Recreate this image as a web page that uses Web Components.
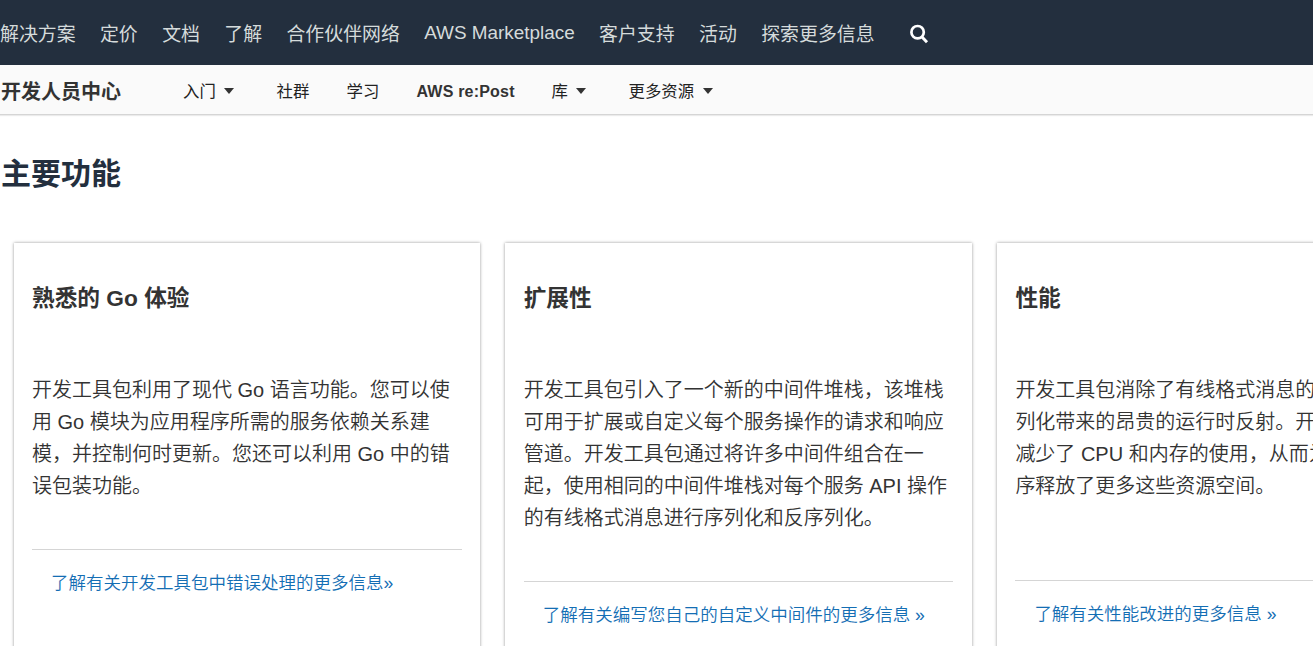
<!DOCTYPE html>
<html lang="zh-CN">
<head>
<meta charset="utf-8">
<title>主要功能</title>
<style>
    body{
        margin: 0;
        height: 646px;
        overflow: hidden;
        background: #fff;
        color: #333;
        font-family: 'Liberation Sans', 'Noto Sans CJK SC', sans-serif;
    }
</style>
</head>
<body>
<dev-page>
    <top-nav slot="nav">
        <span>解决方案</span>
        <span>定价</span>
        <span>文档</span>
        <span>了解</span>
        <span>合作伙伴网络</span>
        <span>AWS Marketplace</span>
        <span>客户支持</span>
        <span>活动</span>
        <span>探索更多信息</span>
    </top-nav>
    <sub-nav slot="nav">
        <span slot="title">开发人员中心</span>
        <nav-item style="width:93.5px" menu>入门</nav-item>
        <nav-item style="width:70px">社群</nav-item>
        <nav-item style="width:70px">学习</nav-item>
        <nav-item style="width:135px" latin>AWS re:Post</nav-item>
        <nav-item style="width:77px" menu>库</nav-item>
        <nav-item menu>更多资源</nav-item>
    </sub-nav>
    <span slot="heading">主要功能</span>
    <feature-card>
        <span slot="title">熟悉的 Go 体验</span>
        开发工具包利用了现代 Go 语言功能。您可以使用 Go 模块为应用程序所需的服务依赖关系建模，并控制何时更新。您还可以利用 Go 中的错误包装功能。
        <span slot="link">了解有关开发工具包中错误处理的更多信息»</span>
    </feature-card>
    <feature-card>
        <span slot="title">扩展性</span>
        开发工具包引入了一个新的中间件堆栈，该堆栈可用于扩展或自定义每个服务操作的请求和响应管道。开发工具包通过将许多中间件组合在一起，使用相同的中间件堆栈对每个服务 API 操作的有线格式消息进行序列化和反序列化。
        <span slot="link">了解有关编写您自己的自定义中间件的更多信息 »</span>
    </feature-card>
    <feature-card style="--copy-height:159px">
        <span slot="title">性能</span>
        开发工具包消除了有线格式消息的<br>列化带来的昂贵的运行时反射。开<br>减少了 CPU 和内存的使用，从而为<br>序释放了更多这些资源空间。
        <span slot="link">了解有关性能改进的更多信息 »</span>
    </feature-card>
</dev-page>

<script>
class DevPage extends HTMLElement {
    constructor() {
        super();
        this.attachShadow({ mode: 'open' })
    }
    connectedCallback() {
        this.render()
    }
    static get styles() {
        return /*CSS*/ `
            :host{
                display: block;
                height: 646px;
                overflow: hidden;
            }
            h2{
                margin: 0;
                padding: 36px 0 0 1px;
                font-size: 30px;
                line-height: 45px;
                color: #232f3e;
            }
            .cards{
                display: grid;
                grid-template-columns: repeat(3, 466.5px);
                column-gap: 25.2px;
                padding: 47px 0 0 13.5px;
            }
        `;
    }
    render() {
        this.shadowRoot.innerHTML = /*HTML*/ `
            <style>${DevPage.styles}</style>
            <slot name="nav"></slot>
            <main>
                <h2><slot name="heading"></slot></h2>
                <section class="cards"><slot></slot></section>
            </main>
        `;
    }
}
customElements.define("dev-page", DevPage);

class TopNav extends HTMLElement {
    constructor() {
        super();
        this.attachShadow({ mode: 'open' })
    }
    connectedCallback() {
        this.render()
    }
    static get styles() {
        return /*CSS*/ `
            :host{
                display: block;
                background: #232f3e;
                color: #d5dbdb;
            }
            nav{
                display: flex;
                align-items: center;
                gap: 24.4px;
                height: 65px;
                font-size: 18.9px;
                white-space: nowrap;
            }
            svg{
                width: 20px;
                height: 20px;
                margin: 3px 0 0 10.5px;
            }
        `;
    }
    render() {
        this.shadowRoot.innerHTML = /*HTML*/ `
            <style>${TopNav.styles}</style>
            <nav>
                <slot></slot>
                <svg viewBox="0 0 20 20" fill="none" stroke="#fff">
                    <circle cx="8.6" cy="8.2" r="6.2" stroke-width="2.7"/>
                    <path d="M12.8 12.8L18 18.2" stroke-width="3"/>
                </svg>
            </nav>
        `;
    }
}
customElements.define("top-nav", TopNav);

class SubNav extends HTMLElement {
    constructor() {
        super();
        this.attachShadow({ mode: 'open' })
    }
    connectedCallback() {
        this.render()
    }
    static get styles() {
        return /*CSS*/ `
            :host{
                display: block;
                background: #fafafa;
                border-bottom: 1px solid #d5d5d5;
                box-shadow: 0 1px 1px rgba(0, 0, 0, .08);
            }
            nav{
                display: flex;
                align-items: center;
                height: 49px;
            }
            strong{
                width: 183px;
                padding: 4px 0 0 1px;
                font-size: 20px;
                line-height: 30px;
                box-sizing: border-box;
            }
        `;
    }
    render() {
        this.shadowRoot.innerHTML = /*HTML*/ `
            <style>${SubNav.styles}</style>
            <nav>
                <strong><slot name="title"></slot></strong>
                <slot></slot>
            </nav>
        `;
    }
}
customElements.define("sub-nav", SubNav);

class NavItem extends HTMLElement {
    constructor() {
        super();
        this.attachShadow({ mode: 'open' })
    }
    connectedCallback() {
        this.render()
    }
    static get styles() {
        return /*CSS*/ `
            :host{
                display: flex;
                align-items: center;
                gap: 8.5px;
                padding-top: 3px;
                font-size: 16.4px;
                font-weight: 400;
                line-height: 24px;
                white-space: nowrap;
                color: #222;
            }
            :host([latin]){
                padding-top: 4px;
                font-size: 16px;
                font-weight: 700;
                letter-spacing: .2px;
                color: #333;
            }
            i{
                display: none;
                border: 5.5px solid transparent;
                border-top: 6px solid #333;
                border-bottom: 0;
            }
            :host([menu]) i{
                display: block;
            }
        `;
    }
    render() {
        this.shadowRoot.innerHTML = /*HTML*/ `
            <style>${NavItem.styles}</style>
            <span><slot></slot></span><i></i>
        `;
    }
}
customElements.define("nav-item", NavItem);

class FeatureCard extends HTMLElement {
    constructor() {
        super();
        this.attachShadow({ mode: 'open' })
    }
    connectedCallback() {
        this.render()
    }
    static get styles() {
        return /*CSS*/ `
            :host{
                display: block;
                height: 500px;
                padding: 0 18.5px;
                box-sizing: border-box;
                background: #fff;
                box-shadow: 0 0 3px rgba(0, 0, 0, .42);
            }
            h3{
                margin: 0;
                padding-top: 37px;
                font-size: 22.7px;
                line-height: 36px;
            }
            .copy{
                min-height: var(--copy-height, 0);
                padding: 58px 0 47px;
                font-size: 20px;
                font-weight: 350;
                line-height: 32px;
            }
            footer{
                border-top: 1px solid #d5d5d5;
                padding: 18px 0 0 19px;
                font-size: 17.5px;
                font-weight: 350;
                line-height: 30px;
                color: #146eb4;
                white-space: nowrap;
            }
        `;
    }
    render() {
        this.shadowRoot.innerHTML = /*HTML*/ `
            <style>${FeatureCard.styles}</style>
            <h3><slot name="title"></slot></h3>
            <div class="copy"><slot></slot></div>
            <footer><slot name="link"></slot></footer>
        `;
    }
}
customElements.define("feature-card", FeatureCard);
</script>
</body>
</html>
